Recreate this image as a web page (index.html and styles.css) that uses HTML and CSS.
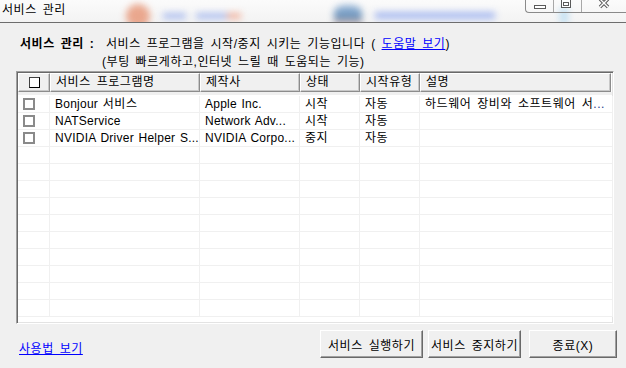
FILE: index.html
```html
<!DOCTYPE html>
<html>
<head>
    <title>서비스 관리</title>
    <meta charset="UTF-8">
    <link rel="stylesheet" href="styles.css">
</head>
<body>
    <div class="titlebar">
        <span class="blob blob-orange"></span>
        <span class="blob blob-text1"></span>
        <span class="blob blob-icon"></span>
        <span class="blob blob-text2"></span>
        <span class="blob blob-glow"></span>
        <div class="title">서비스 관리</div>
        <div class="winbtns">
            <div class="winbtn">
                <svg width="27" height="12" viewBox="0 0 27 12"><rect x="8.5" y="5.5" width="11" height="3" fill="#fff" stroke="#5a5a5a"/></svg>
            </div>
            <div class="winbtn">
                <svg width="27" height="12" viewBox="0 0 27 12"><rect x="7.5" y="-0.5" width="9" height="8" fill="#fff" stroke="#5a5a5a"/><rect x="9.5" y="2.5" width="5" height="3" fill="#fff" stroke="#5a5a5a"/></svg>
            </div>
            <div class="winbtn winbtn-close">
                <svg width="44" height="12" viewBox="0 0 44 12"><path d="M18 -1 L26 7 M26 -1 L18 7" stroke="#5a5a5a" stroke-width="3.4"/><path d="M18 -1 L26 7 M26 -1 L18 7" stroke="#fff" stroke-width="1.4"/></svg>
            </div>
        </div>
    </div>

    <div class="main">
        <div class="intro">
            <div class="line"><b>서비스 관리 :</b>&nbsp; 서비스 프로그램을 시작/중지 시키는 기능입니다 ( <a href="#" class="link">도움말 보기</a>)</div>
            <div class="line line2">(부팅 빠르게하고,인터넷 느릴 때 도움되는 기능)</div>
        </div>

        <div class="listbox">
            <div class="header">
                <div class="hcell hcheck"><span class="hbox"></span></div>
                <div class="hcell">서비스 프로그램명</div>
                <div class="hcell">제작사</div>
                <div class="hcell">상태</div>
                <div class="hcell">시작유형</div>
                <div class="hcell hlast">설명</div>
            </div>
            <div class="rows" id="rows">
                <div class="row">
                    <div class="cell ccheck"><span class="cbox"></span></div>
                    <div class="cell latin">Bonjour <span class="ko">서비스</span></div>
                    <div class="cell latin">Apple Inc.</div>
                    <div class="cell">시작</div>
                    <div class="cell">자동</div>
                    <div class="cell">하드웨어 장비와 소프트웨어 서<span class="dots">...</span></div>
                </div>
                <div class="row">
                    <div class="cell ccheck"><span class="cbox"></span></div>
                    <div class="cell latin">NATService</div>
                    <div class="cell latin">Network Adv...</div>
                    <div class="cell">시작</div>
                    <div class="cell">자동</div>
                    <div class="cell"></div>
                </div>
                <div class="row">
                    <div class="cell ccheck"><span class="cbox"></span></div>
                    <div class="cell latin">NVIDIA Driver Helper S...</div>
                    <div class="cell latin">NVIDIA Corpo...</div>
                    <div class="cell">중지</div>
                    <div class="cell">자동</div>
                    <div class="cell"></div>
                </div>
            </div>
        </div>

        <div class="footer">
            <a href="#" class="link">사용법 보기</a>
            <div class="buttons">
                <button class="btn btn-run">서비스 실행하기</button>
                <button class="btn btn-stop">서비스 중지하기</button>
                <button class="btn btn-close">종료(X)</button>
            </div>
        </div>
    </div>

    <script>
        // fill the list with empty rows down to the bottom of the box
        const rows = document.getElementById('rows');
        for (let i = 0; i < 10; i++) {
            const row = document.createElement('div');
            row.className = 'row';
            for (let c = 0; c < 6; c++) {
                const cell = document.createElement('div');
                cell.className = 'cell';
                row.appendChild(cell);
            }
            rows.appendChild(row);
        }
    </script>
</body>
</html>
```

FILE: styles.css
```css
body {
    margin: 0;
    width: 626px;
    height: 368px;
    overflow: hidden;
    background: #f0f0f0;
    font-family: "Liberation Sans", "Noto Sans CJK KR", sans-serif;
    font-size: 12px;
    letter-spacing: 0.55px;
    word-spacing: 2px;
    color: #000;
}
.titlebar {
    position: relative;
    display: flex;
    height: 22px;
    border-bottom: 1px solid #6d6d6d;
    background: linear-gradient(#fbfbfb, #f3f3f3);
    overflow: hidden;
}
.title {
    position: relative;
    padding: 2px 0 0 2px;
    line-height: 16px;
}
.blob {
    position: absolute;
    filter: blur(3.5px);
    opacity: 0.85;
}
.blob-orange {
    left: 126px;
    top: 4px;
    width: 24px;
    height: 24px;
    border-radius: 50%;
    background: #e89a7c;
}
.blob-text1 {
    left: 163px;
    top: 13px;
    width: 78px;
    height: 6px;
    background: linear-gradient(90deg, #9fb4ee 0 30%, transparent 30% 42%, #9fb4ee 42% 82%, #f0a890 82%);
}
.blob-icon {
    left: 334px;
    top: 5px;
    width: 28px;
    height: 20px;
    border-radius: 40% 40% 10% 10%;
    background: linear-gradient(#8fb2d8, #4f7fb0 60%, #e8b6a0);
}
.blob-text2 {
    left: 375px;
    top: 12px;
    width: 120px;
    height: 7px;
    background: #9ab0f0;
}
.blob-glow {
    left: 560px;
    top: 8px;
    width: 8px;
    height: 16px;
    background: #b8dcf2;
}
.winbtns {
    position: relative;
    display: flex;
    margin-left: auto;
    height: 12px;
    border-left: 1px solid #8a8a8a;
    border-bottom: 1px solid #8a8a8a;
    border-radius: 0 0 0 4px;
}
.winbtn {
    width: 27px;
    height: 12px;
    border-right: 1px solid #a8a8a8;
}
.winbtn-close {
    width: 44px;
    border-right: 0;
}
.winbtn svg {
    display: block;
}
.main {
    padding: 12px 12px 0 16px;
}
.line {
    padding-left: 4px;
    line-height: 18px;
    white-space: nowrap;
}
.line2 {
    padding-left: 86px;
}
.link {
    color: #0000ff;
    text-decoration: underline;
}
.listbox {
    width: 596px;
    height: 251px;
    border: 1px solid;
    border-color: #a0a0a0 #ffffff #ffffff #a0a0a0;
    box-shadow: inset 1px 1px 0 #696969, inset -1px -1px 0 #e3e3e3;
    background: #fff;
    overflow: hidden;
}
.header {
    display: grid;
    grid-template-columns: 32px 150px 100px 60px 60px 1fr;
    height: 19px;
    margin: 1px 1px 0 1px;
    border-bottom: 3px solid #f0f0f0;
}
.hcell {
    padding-left: 5px;
    line-height: 17px;
    background: #f0f0f0;
    border: 1px solid;
    border-color: #fff #8c8c8c #8c8c8c #fff;
    box-shadow: inset -1px -1px 0 #c8c8c8;
    white-space: nowrap;
    overflow: hidden;
}
.hlast {
    margin-right: 1px;
}
.hcheck {
    display: flex;
    align-items: center;
    justify-content: center;
    padding-left: 0;
}
.hbox {
    width: 9px;
    height: 9px;
    border: 1px solid #000;
    border-color: #404040 #000 #000 #404040;
    background: #fff;
}
.rows {
    padding: 1px 0 0 1px;
}
.row {
    display: grid;
    grid-template-columns: 32px 150px 100px 60px 60px 1fr;
    height: 17px;
}
.cell {
    padding-left: 5px;
    line-height: 16px;
    border-right: 1px solid #f0f0f0;
    border-bottom: 1px solid #f0f0f0;
    white-space: nowrap;
    overflow: hidden;
}
.latin {
    letter-spacing: 0.25px;
    word-spacing: 1px;
}
.ko {
    letter-spacing: 0.55px;
}
.dots {
    color: #1a3c8c;
}
.ccheck {
    display: flex;
    align-items: center;
    padding-left: 5px;
}
.cbox {
    width: 8px;
    height: 8px;
    border: 2px solid #8a8a8a;
    background: #fff;
}
.footer {
    display: flex;
    align-items: center;
    padding-top: 6px;
}
.footer .link {
    margin-left: 3px;
    margin-top: 6px;
}
.buttons {
    display: flex;
    gap: 5px;
    margin-left: auto;
    margin-right: -3px;
}
.btn {
    height: 28px;
    padding: 0;
    font-family: "Liberation Sans", "Noto Sans CJK KR", sans-serif;
    font-size: 12px;
    letter-spacing: 0.55px;
    word-spacing: 2px;
    color: #000;
    background: #f0f0f0;
    border: 1px solid;
    border-color: #fff #696969 #696969 #fff;
    box-shadow: inset -1px -1px 0 #a0a0a0;
}
.btn-run {
    width: 103px;
}
.btn-stop {
    width: 93px;
    margin-right: 3px;
}
.btn-close {
    width: 88px;
}
```
